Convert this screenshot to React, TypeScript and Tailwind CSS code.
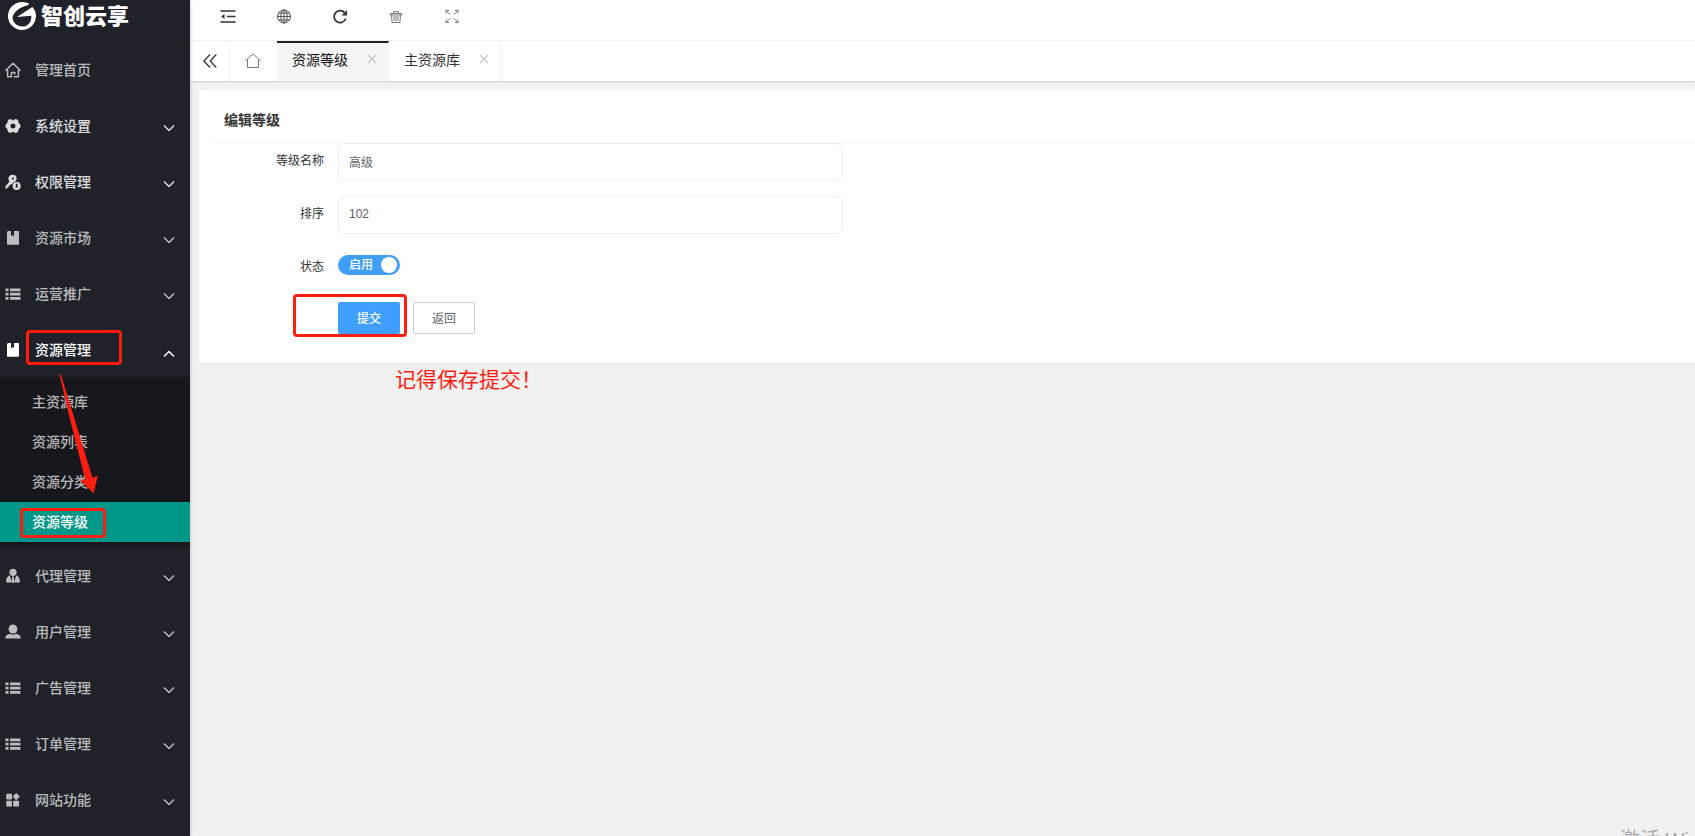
import { useState, type ReactNode } from "react";

type IconName =
  | "home"
  | "gear"
  | "key"
  | "book"
  | "list"
  | "agent"
  | "user"
  | "grid";

const iconShapes: Record<IconName, ReactNode> = {
  home: (
    <path
      d="M.5 8.800 8 1.200l7.500 7.600M2.600 8v6.800h3.800v-4.300h3.400v2M13.400 8v6.800H8.600"
      fill="none"
      stroke="currentColor"
      strokeWidth="1.500"
      strokeLinejoin="round"
    />
  ),
  gear: (
    <path
      fillRule="evenodd"
      d="M4.400 1.200h2.100l.9 1h1.200l.9-1h2.100l1.400.9.6 2.600 1.900 2.300v2l-1.900 2.300-.6 2.500-1.400 1H9.500l-.9-1H7.400l-.9 1H4.400l-1.400-1-.6-2.500L.5 9V7l1.900-2.300.6-2.600zM8 5.500a2.500 2.500 0 1 0 0 5 2.500 2.500 0 0 0 0-5z"
      fill="currentColor"
    />
  ),
  key: (
    <g>
      <path
        fillRule="evenodd"
        d="M7.600.8a4 4 0 0 1 4 4c0 1-.3 1.800-.9 2.500a4.800 4.800 0 0 0-3.700 3.200l-1.300-.6-.5 1.400-1.300.3-.1 1.300-1.200.3-.5 1.300H.4v-2l4-5A4 4 0 0 1 7.600.8zm.4 2.600a1.100 1.100 0 1 0 0 2.200 1.100 1.100 0 0 0 0-2.200z"
        fill="currentColor"
      />
      <path
        fillRule="evenodd"
        d="M11.700 7.900a4 4 0 1 1 0 8 4 4 0 0 1 0-8zm0 1.600a1.100 1.100 0 0 0-.6 2l-.8 1.900h2.800l-.8-1.900a1.100 1.100 0 0 0-.6-2z"
        fill="currentColor"
      />
    </g>
  ),
  book: (
    <path
      d="M3.500 1H6v5.200l1.500-1.300L9 6.200V1h4.500c.3 0 .5.200.5.500v12.500c0 .5-.3.800-.8.800H3c-.6 0-1-.4-1-1V2.500C2 1.700 2.700 1 3.500 1z"
      fill="currentColor"
    />
  ),
  list: (
    <path
      d="M.5 2.500h3v2.800h-3zM5 2.500h10.500v2.800H5zM.5 6.700h3v2.800h-3zM5 6.700h10.500v2.800H5zM.5 10.900h3v2.800h-3zM5 10.900h10.500v2.800H5z"
      fill="currentColor"
    />
  ),
  agent: (
    <g fill="currentColor">
      <circle cx="8" cy="4.300" r="3.600" />
      <path d="M4.800 7.300 6.800 14.600H1.800c-.5 0-.8-.3-.8-.8 0-2.800 1.300-5.400 3.800-6.500zM11.200 7.300 9.200 14.600h5c.5 0 .8-.3.800-.8 0-2.800-1.300-5.400-3.800-6.500zM7.200 8.400h1.600l.6 5L8 15.400l-1.400-2z" />
    </g>
  ),
  user: (
    <g fill="currentColor">
      <ellipse cx="8" cy="5" rx="4.400" ry="4.500" />
      <path d="M5.300 9.800c1.600 1.200 3.800 1.200 5.400 0 2.700.3 4.800 1.700 5.100 4 0 .5-.2.800-.7.800H.9c-.5 0-.7-.3-.7-.8.3-2.300 2.400-3.700 5.100-4z" />
    </g>
  ),
  grid: (
    <path
      d="M1.700 1.800h4.800c.3 0 .5.200.5.500v4.800c0 .3-.2.500-.5.500H1.700c-.3 0-.5-.2-.5-.5V2.300c0-.3.200-.5.500-.5zM1.700 8.800h4.800c.3 0 .5.200.5.500v4.800c0 .3-.2.500-.5.500H1.700c-.3 0-.5-.2-.5-.5V9.300c0-.3.200-.5.500-.5zM8.700 8.800h4.800c.3 0 .5.200.5.500v4.800c0 .3-.2.500-.5.500H8.700c-.3 0-.5-.2-.5-.5V9.300c0-.3.200-.5.500-.5zM11.200.900l3.700 3.700-3.700 3.700-3.700-3.700z"
      fill="currentColor"
    />
  ),
};

function MenuIcon({ name }: { name: IconName }) {
  return (
    <svg viewBox="0 0 16 16" className="size-4 shrink-0" aria-hidden="true">
      {iconShapes[name]}
    </svg>
  );
}

type MenuItem = {
  label: string;
  icon: IconName;
  tone: string;
  leaf?: boolean;
  children?: string[];
};

const dim = "text-white/70";
const bright = "text-white/85";

const menu: MenuItem[] = [
  { label: "管理首页", icon: "home", tone: dim, leaf: true },
  { label: "系统设置", icon: "gear", tone: bright },
  { label: "权限管理", icon: "key", tone: bright },
  { label: "资源市场", icon: "book", tone: dim },
  { label: "运营推广", icon: "list", tone: dim },
  {
    label: "资源管理",
    icon: "book",
    tone: "text-white",
    children: ["主资源库", "资源列表", "资源分类", "资源等级"],
  },
  { label: "代理管理", icon: "agent", tone: dim },
  { label: "用户管理", icon: "user", tone: dim },
  { label: "广告管理", icon: "list", tone: dim },
  { label: "订单管理", icon: "list", tone: dim },
  { label: "网站功能", icon: "grid", tone: dim },
];

function Logo() {
  return (
    <div className="flex h-[41px] items-center gap-1 border-b border-[#191b21] pb-2 pl-[7px] text-white">
      <svg viewBox="0 0 30 30" className="size-[30px]" aria-hidden="true">
        <path
          d="M20.500 2.100A14 14 0 1 0 28.900 13.500C28.500 10.500 27.200 8 25.300 6L10 16 24.300 14.800C24.700 21.500 20.500 25.500 15.500 25.500 10 25.500 5.500 21.500 5.500 16 7.500 10.500 13 6 20 4.500L22.500 2.900z"
          fill="currentColor"
        />
      </svg>
      <span className="pt-0.5 text-[22px] leading-7 font-black">智创云享</span>
    </div>
  );
}

function Sidebar() {
  return (
    <aside className="z-10 w-[190px] shrink-0 bg-[#20222a] shadow-[1px_0_3px_rgba(0,0,0,0.15)]">
      <Logo />
      <nav>
        <ul>
          {menu.map((item) => (
            <li key={item.label}>
              <button
                type="button"
                className={`relative flex h-14 w-full items-center gap-3.5 pt-0.5 pr-[15px] pl-[5px] text-left text-sm font-medium ${item.tone}`}
              >
                <MenuIcon name={item.icon} />
                <span className="flex-1">{item.label}</span>
                {!item.leaf && (
                  <svg
                    viewBox="0 0 12 8"
                    className={`h-2 w-3 ${item.children ? "mt-2" : "mt-1"}`}
                    aria-hidden="true"
                  >
                    <path
                      d={item.children ? "M1 6.500 6 1.500l5 5" : "M1 1.500l5 5 5-5"}
                      fill="none"
                      stroke="currentColor"
                      strokeWidth="1.500"
                    />
                  </svg>
                )}
                {item.children && (
                  <span className="absolute top-[9px] left-[26px] h-[35px] w-24 rounded-sm border-3 border-[#ff1d10]" />
                )}
              </button>
              {item.children && (
                <ul className="relative bg-[#17181d] py-[5px]">
                  {item.children.map((child) => {
                    const active = child === "资源等级";
                    return (
                      <li key={child}>
                        <a
                          href="#"
                          className={`relative flex h-10 items-center pl-8 text-sm font-medium ${
                            active ? "bg-[#009688] text-white" : "text-white/70"
                          }`}
                        >
                          {child}
                          {active && (
                            <span className="absolute top-1.5 left-5 h-[30px] w-[86px] rounded-sm border-3 border-[#ff1d10]" />
                          )}
                        </a>
                      </li>
                    );
                  })}
                  <li className="absolute -top-1 left-[58px]" aria-hidden="true">
                    <svg viewBox="0 0 42 122" className="h-[122px] w-[42px]">
                      <path
                        d="M1.500 1.500 2.800 1 34.500 105 39.800 102.500 35.600 120.500 21.500 106.500 27.300 107 11 42z"
                        fill="#ff1d10"
                      />
                    </svg>
                  </li>
                </ul>
              )}
            </li>
          ))}
        </ul>
      </nav>
    </aside>
  );
}

const tools: { label: string; tone: string; drawing: ReactNode }[] = [
  {
    label: "收起菜单",
    tone: "text-[#333]",
    drawing: (
      <g>
        <path
          d="M.5 3h15M7 8.500h8.500M.5 14h15"
          stroke="currentColor"
          strokeWidth="1.600"
        />
        <path d="M4.500 6v5L1.200 8.500z" fill="currentColor" />
      </g>
    ),
  },
  {
    label: "打开网站",
    tone: "text-[#444]",
    drawing: (
      <g fill="none" stroke="currentColor" strokeWidth="0.900">
        <circle cx="8" cy="8.500" r="6.500" />
        <ellipse cx="8" cy="8.500" rx="3.200" ry="6.500" />
        <path d="M8 2v13M1.500 8.500h13M2.600 5h10.800M2.600 12h10.800" />
      </g>
    ),
  },
  {
    label: "刷新",
    tone: "text-[#333]",
    drawing: (
      <g>
        <path
          d="M12.600 4.600A6 6 0 1 0 13.800 10.500"
          fill="none"
          stroke="currentColor"
          strokeWidth="1.700"
        />
        <path d="M15 2V7.500H9.500z" fill="currentColor" />
      </g>
    ),
  },
  {
    label: "清除缓存",
    tone: "text-[#777]",
    drawing: (
      <g fill="none" stroke="currentColor" strokeWidth="1">
        <path d="M2.300 5.500h11.400v1.500H2.300zM5.500 5.500v-2h5v2M3.600 7l.4 7.500h8l.4-7.500" />
        <path d="M6 8v5M8 8v5M10 8v5" />
      </g>
    ),
  },
  {
    label: "全屏",
    tone: "text-[#666]",
    drawing: (
      <path
        d="M2 5.500V2.500h3M2.200 2.700 6.200 6.700M11 2.500h3v3M13.800 2.700 9.800 6.700M2 11.500v3h3M2.200 14.300 6.200 10.300M14 11.500v3h-3M13.800 14.300 9.800 10.300"
        fill="none"
        stroke="currentColor"
        strokeWidth="0.900"
      />
    ),
  },
];

function Toolbar() {
  return (
    <header className="flex h-[41px] border-b border-[#f3f3f3] bg-white pb-2 pl-2.5">
      {tools.map((tool) => (
        <button
          key={tool.label}
          type="button"
          aria-label={tool.label}
          className={`flex w-14 items-center justify-center ${tool.tone}`}
        >
          <svg viewBox="0 0 16 16" className="size-4 overflow-visible" aria-hidden="true">
            {tool.drawing}
          </svg>
        </button>
      ))}
    </header>
  );
}

function Tab({ label, active }: { label: string; active?: boolean }) {
  return (
    <div
      className={`flex w-28 items-center justify-between border-t-2 border-r border-r-[#f3f3f3] pr-[11px] pb-1 pl-[15px] ${
        active ? "border-t-[#20222a] bg-[#f5f5f5]" : "border-t-white bg-white"
      }`}
    >
      <a href="#" className={`text-sm ${active ? "text-[#111]" : "text-[#333]"}`}>
        {label}
      </a>
      <button type="button" aria-label={`关闭${label}`} className="pb-0.5 text-[#c2c2c2]">
        <svg viewBox="0 0 10 10" className="size-2.5" aria-hidden="true">
          <path d="M1 1l8 8M9 1l-8 8" stroke="currentColor" strokeWidth="1.100" />
        </svg>
      </button>
    </div>
  );
}

function TabBar() {
  return (
    <div className="flex h-10 bg-white shadow-[0_1px_2px_rgba(0,0,0,0.15)]">
      <button
        type="button"
        aria-label="向左滚动"
        className="flex w-10 items-center justify-center border-r border-[#f3f3f3] text-[#333]"
      >
        <svg viewBox="0 0 14 14" className="size-3.5" aria-hidden="true">
          <path
            d="M7 .5.900 7 7 13.500M13.300.5 7.200 7l6.100 6.500"
            fill="none"
            stroke="currentColor"
            strokeWidth="1.300"
          />
        </svg>
      </button>
      <button
        type="button"
        aria-label="首页"
        className="flex w-[47px] items-center justify-center pr-px text-[#777]"
      >
        <svg viewBox="0 0 16 16" className="size-4" aria-hidden="true">
          <path
            d="M.3 7.800 8 1l7.700 6.800M2.500 6.500v8h11v-8"
            fill="none"
            stroke="currentColor"
            strokeWidth="1"
          />
        </svg>
      </button>
      <Tab label="资源等级" active />
      <Tab label="主资源库" />
    </div>
  );
}

const labelClass = "w-[115px] text-right text-xs text-[#333]";
const inputClass =
  "h-[38px] w-[505px] rounded-md border border-[#eee] bg-white px-2.5 pb-0.5 text-xs text-[#606266] outline-none";

function LevelForm() {
  const [name, setName] = useState("高级");
  const [order, setOrder] = useState("102");
  const [enabled, setEnabled] = useState(true);

  return (
    <form
      className="flex flex-col gap-[15px]"
      onSubmit={(event) => event.preventDefault()}
    >
      <div className="flex gap-3.5">
        <label htmlFor="level-name" className={`${labelClass} leading-9`}>
          等级名称
        </label>
        <input
          id="level-name"
          value={name}
          onChange={(event) => setName(event.target.value)}
          className={inputClass}
        />
      </div>
      <div className="flex gap-3.5">
        <label htmlFor="level-order" className={`${labelClass} leading-9`}>
          排序
        </label>
        <input
          id="level-order"
          value={order}
          onChange={(event) => setOrder(event.target.value)}
          className={inputClass}
        />
      </div>
      <div className="flex h-[38px] gap-3.5">
        <label htmlFor="level-status" className={`${labelClass} leading-9`}>
          状态
        </label>
        <label
          htmlFor="level-status"
          className="mt-1.5 flex h-5 w-[62px] cursor-pointer items-center justify-between rounded-full bg-[#409eff] pr-[3px] pl-[11px] text-xs text-white"
        >
          <input
            id="level-status"
            type="checkbox"
            checked={enabled}
            onChange={(event) => setEnabled(event.target.checked)}
            className="sr-only"
          />
          <span className="font-medium">{enabled ? "启用" : "禁用"}</span>
          <span className="size-4 rounded-full bg-white" />
        </label>
      </div>
      <div className="relative flex gap-[13px] pl-[129px]">
        <button
          type="submit"
          className="h-8 w-[62px] rounded-xs bg-[#409eff] pt-0.5 text-xs font-medium text-white"
        >
          提交
        </button>
        <button
          type="button"
          className="h-8 w-[62px] rounded-xs border border-[#ccc] bg-white pt-0.5 text-xs text-[#606266]"
        >
          返回
        </button>
        <span className="pointer-events-none absolute -top-2 left-[84px] h-[43px] w-[114px] rounded-sm border-3 border-[#ff1d10]" />
      </div>
    </form>
  );
}

export default function App() {
  return (
    <div className="relative flex min-h-screen overflow-hidden bg-[#f1f1f1] font-['Liberation_Sans','Noto_Sans_CJK_SC',sans-serif]">
      <Sidebar />
      <div className="flex min-w-0 flex-1 flex-col">
        <Toolbar />
        <TabBar />
        <main className="pt-[9px] pl-[9px]">
          <section className="rounded-l-xs bg-white pb-[29px] pl-2.5 shadow-[0_1px_2px_rgba(0,0,0,0.05)]">
            <h1 className="h-[53px] border-b border-[#f6f6f6] px-[15px] pt-5 text-sm font-bold text-[#333]">
              编辑等级
            </h1>
            <LevelForm />
          </section>
          <p className="pt-[3px] pl-[196px] text-[21px] leading-7 text-[#ff1d10]">
            记得保存提交！
          </p>
        </main>
      </div>
      <div className="pointer-events-none absolute right-0 bottom-0 h-2.5 w-[75px] overflow-hidden text-xl leading-7 whitespace-nowrap text-[#aaa]">
        激活 Windows
      </div>
    </div>
  );
}
